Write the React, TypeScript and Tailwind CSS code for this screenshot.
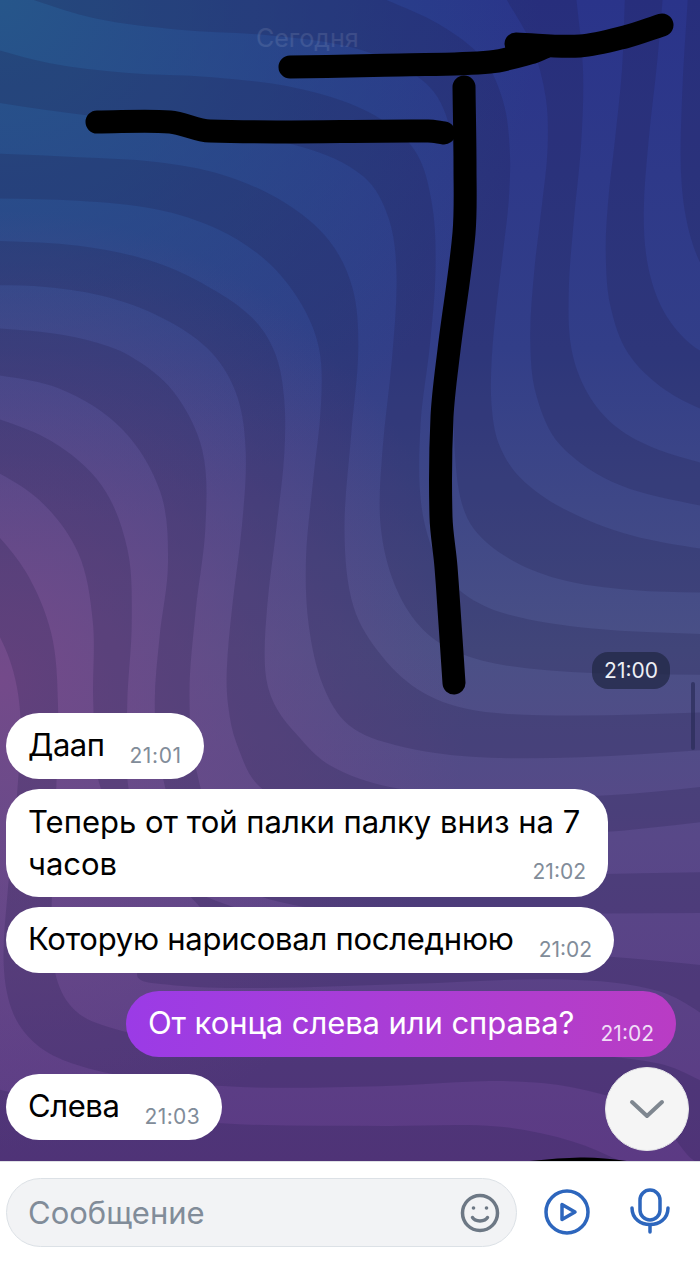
import type { ReactNode } from "react";

type Pt = [number, number];
type Band = [Pt[], Pt[]];

// hand traced edges of the wallpaper stripes, every band is [one edge, other edge]
const bands: Band[] = [
  [
    [[18, -5], [90, 23], [180, 32], [268, 32], [357, 45], [402, 62], [446, 98], [456, 130], [458, 250], [455, 350], [451, 483], [464, 517], [491, 557], [558, 583], [625, 592], [720, 593]],
    [[375, -5], [446, 23], [491, 57], [505, 100], [512, 150], [510, 200], [503, 250], [497, 300], [490, 367], [490, 400], [496, 450], [513, 475], [558, 510], [625, 540], [720, 552]],
  ],
  [
    [[-20, 45], [54, 67], [112, 74], [223, 76], [290, 83], [380, 110], [420, 143], [435, 200], [437, 267], [433, 350], [416, 417], [417, 517], [435, 567], [464, 597], [491, 613], [580, 633], [720, 635]],
    [[-20, 100], [54, 112], [90, 115], [200, 130], [321, 143], [370, 173], [393, 217], [399, 267], [395, 350], [379, 467], [377, 517], [388, 583], [415, 627], [446, 650], [491, 667], [580, 675], [720, 675]],
  ],
  [
    [[-20, 153], [89, 158], [156, 160], [223, 170], [290, 200], [335, 240], [357, 283], [362, 350], [352, 417], [339, 550], [348, 610], [380, 660], [424, 700], [467, 712], [550, 719], [720, 712]],
    [[-20, 198], [89, 200], [156, 205], [223, 227], [268, 257], [304, 300], [324, 350], [324, 393], [312, 483], [304, 567], [304, 617], [323, 700], [343, 727], [387, 747], [467, 760], [567, 760], [720, 749]],
  ],
  [
    [[-20, 240], [89, 243], [156, 257], [223, 293], [259, 320], [279, 350], [286, 400], [286, 450], [279, 517], [263, 617], [263, 683], [272, 700], [290, 733], [333, 770], [363, 788], [500, 802], [607, 797], [720, 785]],
    [[-20, 285], [45, 285], [112, 293], [170, 320], [219, 350], [241, 393], [248, 450], [246, 517], [228, 617], [226, 683], [227, 700], [233, 743], [253, 787], [300, 830], [450, 840], [607, 835], [720, 820]],
  ],
  [
    [[-20, 327], [45, 330], [89, 340], [125, 350], [179, 383], [210, 450], [210, 517], [192, 617], [188, 700], [190, 760], [215, 850], [270, 885], [400, 880], [607, 873], [720, 872]],
    [[-20, 372], [67, 383], [125, 417], [172, 500], [172, 550], [156, 650], [154, 700], [155, 760], [175, 830], [215, 890], [300, 915], [450, 915], [617, 913], [720, 913]],
  ],
  [
    [[-20, 412], [58, 437], [107, 477], [134, 550], [134, 617], [125, 700], [125, 800], [140, 860], [200, 897], [233, 907], [350, 940], [500, 955], [617, 953], [720, 967]],
    [[-20, 462], [45, 493], [85, 550], [97, 617], [92, 700], [92, 790], [120, 850], [200, 900], [240, 935], [160, 960], [123, 973], [143, 987], [250, 990], [400, 985], [600, 975], [660, 983], [720, 1025]],
  ],
  [
    [[-20, 515], [31, 567], [58, 633], [58, 700], [58, 790], [50, 900], [50, 973], [63, 1003], [90, 1023], [127, 1037], [300, 1055], [600, 1050], [657, 1057], [720, 1090]],
    [[-20, 600], [18, 667], [21, 700], [21, 790], [5, 900], [0, 973], [10, 1017], [33, 1047], [70, 1067], [117, 1073], [222, 1095], [402, 1085], [491, 1080], [540, 1080], [607, 1093], [650, 1110], [673, 1130], [690, 1170], [720, 1170]],
  ],
  [
    [[-20, 1085], [40, 1100], [222, 1135], [402, 1123], [507, 1123], [573, 1137], [640, 1170]],
    [[-20, 1170], [640, 1170]],
  ],
  [
    [[504, -5], [536, 40], [549, 100], [549, 150], [543, 200], [533, 267], [528, 350], [532, 390], [553, 450], [603, 490], [720, 510]],
    [[576, -5], [587, 67], [582, 150], [573, 217], [567, 300], [568, 350], [583, 397], [617, 430], [647, 450], [720, 468]],
  ],
  [
    [[625, -5], [625, 67], [613, 150], [608, 200], [604, 250], [607, 307], [623, 357], [660, 393], [720, 418]],
    [[663, -5], [660, 50], [646, 150], [642, 217], [645, 267], [660, 313], [687, 347], [720, 362]],
  ],
  [
    [[688, -5], [680, 100], [680, 200], [687, 243], [720, 300]],
    [[720, -5], [720, 300]],
  ],
];

const strokes: Pt[][] = [
  [[97, 122], [170, 122], [210, 131], [428, 131], [444, 133]],
  [[290, 67], [400, 65], [490, 62], [530, 53], [545, 47]],
  [[516, 44], [580, 46], [625, 37], [662, 25]],
  [[464, 87], [465, 167], [464, 233], [449, 350], [442, 417], [441, 517], [446, 567], [454, 683]],
];

// one pass of neighbour averaging, takes the corners out of the traced edges
function relax(pts: Pt[]): Pt[] {
  return pts.map((p, i) => {
    const a = pts[i - 1];
    const b = pts[i + 1];
    if (!a || !b) return p;
    return [(a[0] + 2 * p[0] + b[0]) / 4, (a[1] + 2 * p[1] + b[1]) / 4];
  });
}

// spline through the points, handle length follows the segment so it does not kink
function curve(pts: Pt[], move = true) {
  let d = move ? `M${pts[0][0]} ${pts[0][1]}` : `L${pts[0][0]} ${pts[0][1]}`;
  const tangent = (a: Pt, b: Pt): Pt => {
    const len = Math.hypot(b[0] - a[0], b[1] - a[1]) || 1;
    return [(b[0] - a[0]) / len, (b[1] - a[1]) / len];
  };
  for (let i = 0; i < pts.length - 1; i++) {
    const p1 = pts[i];
    const p2 = pts[i + 1];
    const t1 = tangent(pts[i - 1] ?? p1, p2);
    const t2 = tangent(p1, pts[i + 2] ?? p2);
    const h = Math.hypot(p2[0] - p1[0], p2[1] - p1[1]) / 3;
    d += `C${p1[0] + t1[0] * h} ${p1[1] + t1[1] * h} ${p2[0] - t2[0] * h} ${p2[1] - t2[1] * h} ${p2[0]} ${p2[1]}`;
  }
  return d;
}

function Wallpaper() {
  return (
    <svg className="absolute inset-0 h-full w-full" viewBox="0 0 700 1161" preserveAspectRatio="none">
      <defs>
        <linearGradient id="base" x1="0" y1="0" x2="0" y2="1">
          <stop offset="0" stopColor="#2a348a" />
          <stop offset="0.3" stopColor="#323e88" />
          <stop offset="0.56" stopColor="#4a5086" />
          <stop offset="0.72" stopColor="#584888" />
          <stop offset="1" stopColor="#5c3a84" />
        </linearGradient>
        <radialGradient id="teal" gradientUnits="userSpaceOnUse" cx="0" cy="0" r="540">
          <stop offset="0" stopColor="#26568a" />
          <stop offset="1" stopColor="#26568a" stopOpacity="0" />
        </radialGradient>
        <radialGradient id="plum" gradientUnits="userSpaceOnUse" cx="0" cy="680" r="470">
          <stop offset="0" stopColor="#744a8a" />
          <stop offset="1" stopColor="#744a8a" stopOpacity="0" />
        </radialGradient>
      </defs>
      <rect width="700" height="1161" fill="url(#base)" />
      <rect width="700" height="1161" fill="url(#teal)" />
      <rect width="700" height="1161" fill="url(#plum)" />
      {bands.map(([a, b], i) => (
        <path key={i} d={`${curve(relax(a))}${curve(relax([...b].reverse()), false)}Z`} fill="#1c1a46" fillOpacity="0.2" />
      ))}
      <g fill="none" stroke="#000" strokeWidth="23" strokeLinecap="round" strokeLinejoin="round">
        {strokes.map((s, i) => (
          <path key={i} d={curve(s)} />
        ))}
      </g>
      <path d="M520 1162Q557 1158 580 1157.500T633 1162Z" fill="#000" />
    </svg>
  );
}

function Time({ children, out, className = "" }: { children: ReactNode; out?: boolean; className?: string }) {
  return (
    <span className={`whitespace-nowrap text-[21px] leading-[26px] ${out ? "text-[#f0dcf7]" : "text-[#818c99]"} ${className}`}>
      {children}
    </span>
  );
}

function Message({ text, time, tight, timeTight }: { text: string; time: string; tight: string; timeTight?: string }) {
  return (
    <div className="flex h-[66px] w-fit items-start rounded-[33px] bg-white pl-[22px] pr-[22px] text-black">
      <span className={`whitespace-nowrap pt-[10px] text-[31px] leading-[44px] ${tight}`}>{text}</span>
      <span className="ml-[25px] pt-[30px]">
        <Time className={timeTight}>{time}</Time>
      </span>
    </div>
  );
}

export default function App() {
  return (
    <div className="flex h-[1261px] w-[700px] flex-col overflow-hidden bg-white font-['Inter','Noto_Sans',sans-serif]">
      <div className="relative flex h-[1161px] flex-col px-[6px] pb-[21px]">
        <Wallpaper />
        <div className="relative ml-[250px] self-start pt-[22px] text-[25px] leading-[32px] text-white/10">Сегодня</div>

        <div className="relative mt-auto mb-[24px] mr-[24px] self-end rounded-[16px] bg-[#212846]/75 px-[12px] py-[5px] text-[21px] leading-[27px] text-[#eef0f5]">
          21:00
        </div>

        <div className="relative flex flex-col">
          <Message text="Даап" time="21:01" tight="tracking-[-0.5px]" timeTight="tracking-[0.6px]" />

          <div className="mt-[10px] h-[108px] w-[602px] rounded-[33px] bg-white pl-[22px] pr-[22px] pt-[12px] text-black">
            <div className="whitespace-nowrap text-[31px] leading-[42px]">Теперь от той палки палку вниз на 7</div>
            <div className="flex items-end justify-between">
              <span className="text-[31px] leading-[42px]">часов</span>
              <Time>21:02</Time>
            </div>
          </div>

          <div className="mt-[10px]">
            <Message text="Которую нарисовал последнюю" time="21:02" tight="tracking-[-0.26px]" />
          </div>

          <div className="mt-[18px] mr-[18px] flex h-[66px] w-[550px] items-start justify-between self-end rounded-[33px] bg-gradient-to-r from-[#9b3be6] to-[#b93cc4] pl-[22px] pr-[22px] text-white">
            <span className="whitespace-nowrap pt-[10px] text-[31px] leading-[44px] tracking-[-0.08px]">От конца слева или справа?</span>
            <span className="pt-[30px]">
              <Time out>21:02</Time>
            </span>
          </div>

          <div className="mt-[17px]">
            <Message text="Слева" time="21:03" tight="tracking-[-0.4px]" timeTight="tracking-[0.4px]" />
          </div>
        </div>

        <div className="absolute right-[5px] top-[682px] h-[68px] w-[4px] rounded-full bg-[#2a2c58]/70" />

        <button className="absolute bottom-[10px] left-[605px] flex h-[84px] w-[84px] items-center justify-center rounded-full border border-[#e6e7e9] bg-[#f5f5f5]">
          <svg width="36" height="22" viewBox="0 0 36 22" fill="none" stroke="#7f8790" strokeWidth="4" strokeLinecap="round" strokeLinejoin="round">
            <path d="M3 4L18 18L33 4" />
          </svg>
        </button>
      </div>

      <div className="flex flex-1 items-start border-t border-[#dfe1e6] bg-white px-[6px] pt-[16px]">
        <div className="flex h-[69px] w-[511px] items-center justify-between rounded-full border-[1.500px] border-[#dce1e6] bg-[#f2f3f5] pl-[21px] pr-[16px]">
          <span className="pt-[2px] text-[31px] text-[#818c99]">Сообщение</span>
          <svg width="40" height="40" viewBox="0 0 40 40" fill="none" stroke="#6d7885" strokeWidth="3.500" strokeLinecap="round">
            <circle cx="20" cy="20" r="17.500" />
            <path d="M12.500 24.500C15 29 25 29 27.500 24.500" />
            <circle cx="13.500" cy="15" r="1.800" fill="#6d7885" stroke="none" />
            <circle cx="26.500" cy="15" r="1.800" fill="#6d7885" stroke="none" />
          </svg>
        </div>

        <svg className="ml-[27px] mt-[11px]" width="46" height="46" viewBox="0 0 46 46" fill="none" stroke="#2d66bd" strokeWidth="3.500" strokeLinejoin="round">
          <circle cx="23" cy="23" r="21" />
          <path d="M18 15.500V30.500L31 23Z" />
        </svg>

        <svg className="ml-[40px] mt-[10px]" width="40" height="46" viewBox="0 0 40 46" fill="none" stroke="#2d66bd" strokeWidth="3.500" strokeLinecap="round">
          <rect x="10" y="2" width="20" height="30" rx="10" />
          <path d="M2 20C2 42 38 42 38 20" />
          <path d="M20 37V44" />
        </svg>
      </div>
    </div>
  );
}
